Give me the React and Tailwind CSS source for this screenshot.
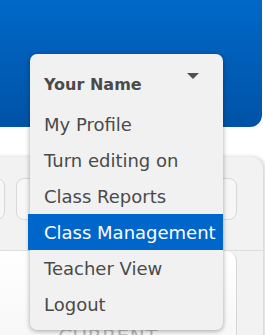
import React from 'react'

const items = ['My Profile', 'Turn editing on', 'Class Reports', 'Class Management', 'Teacher View', 'Logout']

export default function App() {
  return (
    <div className="relative w-[265px] h-[335px] overflow-hidden bg-white font-['DejaVu_Sans',sans-serif]">
      {/* header band */}
      <div className="h-[127px] w-[262px] rounded-br-[12px] bg-gradient-to-b from-[#0068c8] to-[#0053a6]" />

      {/* page body */}
      <div className="mt-[30px] ml-[-20px] w-[283px] rounded-tr-[12px] bg-[#f2f2f2] shadow-[2px_0_4px_rgba(0,0,0,0.18)] h-[200px]">
        <div className="flex gap-[11px] pt-[21px] px-0">
          <div className="h-[42px] w-[25px] rounded-[8px] border border-[#d8d8d8] bg-[#f7f7f7]" />
          <div className="h-[42px] flex-1 rounded-[8px] border border-[#d8d8d8] bg-[#f7f7f7]" />
          <div className="h-[42px] w-[50px] mr-[26px] rounded-[8px] border border-[#d8d8d8] bg-[#f7f7f7]" />
        </div>
        <div className="mt-[30px] border-t border-[#dedede] pr-[26px]">
          <div className="h-[100px] rounded-tr-[10px] border-r border-[#d6d6d6] bg-gradient-to-b from-[#ffffff] to-[#f6f6f6] flex justify-center pt-[70px]">
            <span className="text-[20px] text-[#b8b8b8] tracking-wide">CURRENT</span>
          </div>
        </div>
      </div>

      {/* dropdown menu */}
      <div className="absolute left-[30px] top-[54px] w-[193px] h-[276px] rounded-[7px] bg-[#f1f1f1] shadow-[0_1px_5px_rgba(0,0,0,0.35)] text-[#4a4a4a]">
        <div className="flex items-center justify-between h-[52px] pl-[14px] pr-[24px] pt-[10px]">
          <span className="text-[16px] font-bold">Your Name</span>
          <svg width="12" height="7" viewBox="0 0 12 7" className="mb-[18px]">
            <path d="M0 0 H12 L6 6 Z" fill="#505050" />
          </svg>
        </div>
        <div className="flex flex-col">
          {items.map((item) => (
            <div
              key={item}
              className={
                item === 'Class Management'
                  ? 'h-[36px] flex items-center ml-[-2px] pl-[16px] bg-[#0066cc] text-white text-[18px]'
                  : 'h-[36px] flex items-center pl-[14px] text-[18px]'
              }
            >
              {item}
            </div>
          ))}
        </div>
      </div>
    </div>
  )
}
